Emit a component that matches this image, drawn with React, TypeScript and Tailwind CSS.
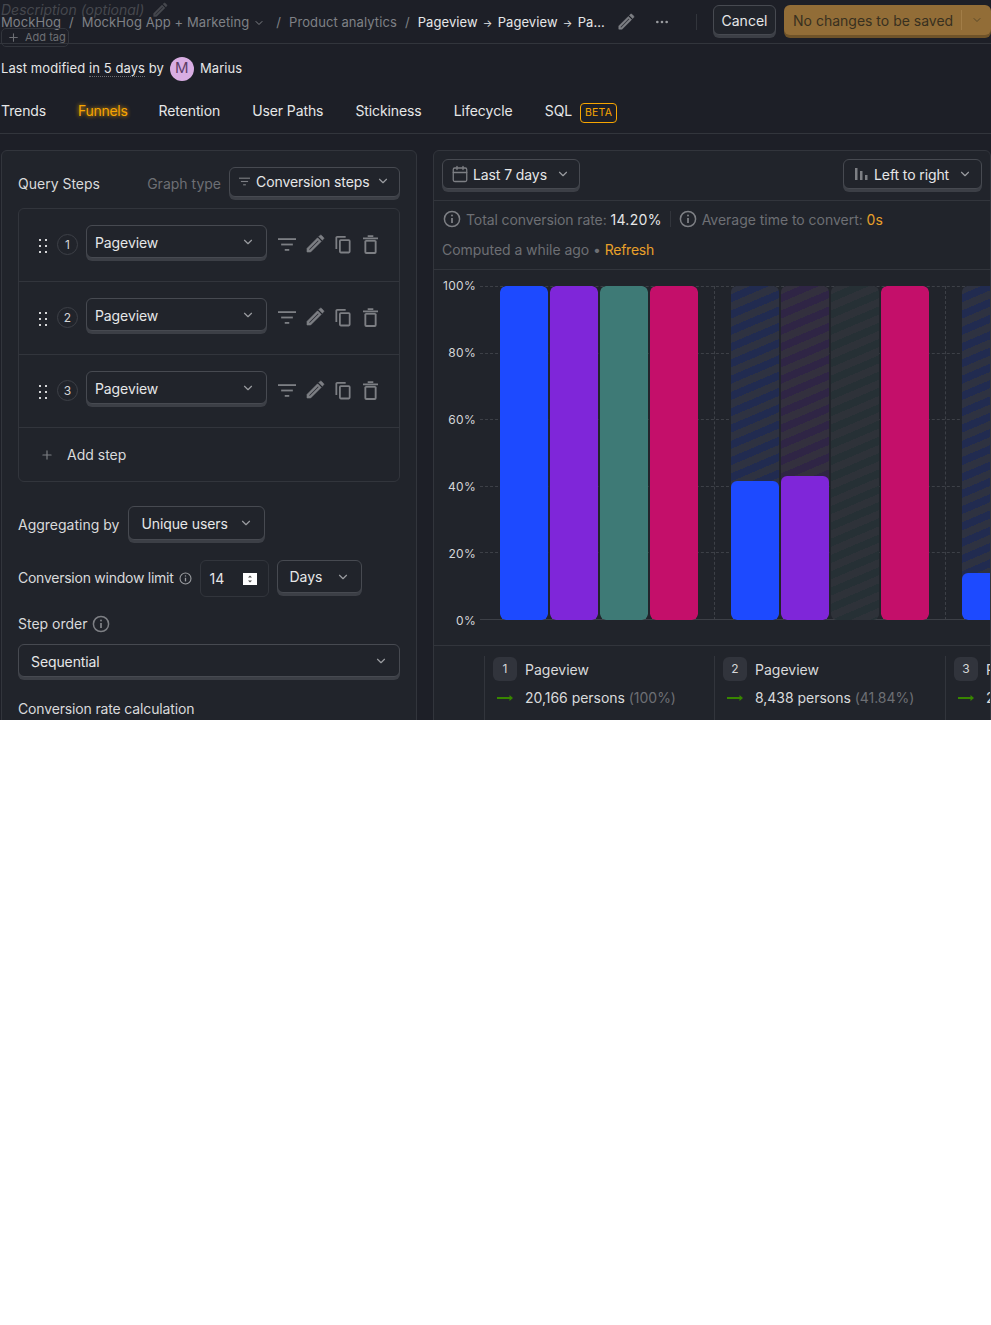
import React from 'react';
import { ChevronDown, Plus, MoreHorizontal, Calendar } from 'lucide-react';

const FONT = "font-['Inter','Liberation_Sans',sans-serif]";

const Pencil = ({ className }: { className?: string }) => (
    <svg viewBox="0 0 20 20" className={className} fill="currentColor" stroke="currentColor" strokeWidth="0.6">
        <path d="M2 18v-3.6L12.6 3.8l3.6 3.6L5.6 18H2zm2-2.8V16h.8l9-9-.8-.8-9 9zM13.8 2.6l1.1-1.1c.5-.5 1.2-.5 1.7 0l1.9 1.9c.5.5.5 1.2 0 1.7l-1.1 1.1-3.6-3.6z" />
    </svg>
);

const FilterLines = ({ className }: { className?: string }) => (
    <svg viewBox="0 0 20 14" className={className} fill="currentColor">
        <rect x="0" y="0" width="20" height="2" />
        <rect x="3.5" y="6" width="13" height="2" />
        <rect x="7.5" y="12" width="5" height="2" />
    </svg>
);

const CopyIcon = ({ className }: { className?: string }) => (
    <svg viewBox="0 0 18 20" className={className} fill="none" stroke="currentColor" strokeWidth="2">
        <path d="M1.5 15V2.5a1 1 0 0 1 1-1H12" />
        <rect x="5.5" y="5" width="11" height="14" rx="1" />
    </svg>
);

const TrashIcon = ({ className }: { className?: string }) => (
    <svg viewBox="0 0 16 20" className={className} fill="none" stroke="currentColor" strokeWidth="2">
        <path d="M0 3.5h16M5 1h6" />
        <path d="M2.5 6v12a1 1 0 0 0 1 1h9a1 1 0 0 0 1-1V6" />
        <path d="M2.5 6h11" />
    </svg>
);

const InfoIcon = ({ className }: { className?: string }) => (
    <svg viewBox="0 0 18 18" className={className} fill="none" stroke="currentColor" strokeWidth="1.5">
        <circle cx="9" cy="9" r="7.6" />
        <path d="M9 8v5" strokeWidth="1.8" />
        <circle cx="9" cy="5.4" r="1" fill="currentColor" stroke="none" />
    </svg>
);

const GreenArrow = () => (
    <svg viewBox="0 0 16 8" className="w-[16px] h-[8px] text-[#388600]" fill="currentColor">
        <rect x="0" y="3" width="14" height="2" />
        <path d="M12.5 1L16 4l-3.5 3z" />
    </svg>
);

const DragDots = () => (
    <svg viewBox="0 0 8 14" className="w-[8px] h-[14px] text-[#d5d6d8]" fill="currentColor">
        {[1, 7, 13].map(y => (
            <React.Fragment key={y}>
                <rect x="0" y={y - 1} width="2" height="2" />
                <rect x="6" y={y - 1} width="2" height="2" />
            </React.Fragment>
        ))}
    </svg>
);

const SelectButton: React.FC<{ label: string; className?: string; icon?: React.ReactNode }> = ({ label, className, icon }) => (
    <div className={`flex items-center justify-between rounded-[6px] border border-[#474a51] bg-[#21242b] shadow-[0_3px_0_0_#3c3f46] text-[14px] tracking-[-0.1px] text-[#e6e7e8] ${className ?? ''}`}>
        <span className="flex items-center gap-[6px] whitespace-nowrap">{icon}{label}</span>
        <ChevronDown className="w-[14px] h-[14px] text-[#9a9ca0]" />
    </div>
);

const QueryStep: React.FC<{ n: number }> = ({ n }) => (
    <div className="flex items-start h-[73px] border-b border-[#32353c] pt-[16px]">
        <div className="w-[19px] ml-[20px] mt-[14px]"><DragDots /></div>
        <div className="w-[21px] h-[21px] mt-[9px] ml-[-1px] rounded-full border border-[#3d4047] flex items-center justify-center text-[12px] text-[#d5d6d8]">{n}</div>
        <SelectButton label="Pageview" className="ml-[8px] w-[181px] h-[33px] pl-[8px] pr-[11px] pt-[1px]" />
        <div className="flex items-center text-[#7d7f84] mt-[9px]">
            <FilterLines className="w-[18px] h-[13px] ml-[11px]" />
            <Pencil className="w-[20px] h-[20px] ml-[9px]" />
            <CopyIcon className="w-[16px] h-[19px] ml-[10px]" />
            <TrashIcon className="w-[15px] h-[19px] ml-[12px]" />
        </div>
    </div>
);

const Bar: React.FC<{ color: string; ghost?: string; height?: string }> = ({ color, ghost, height }) => (
    <div className={`relative w-[48px] h-full rounded-[6px] overflow-hidden shrink-0 ${ghost ?? ''}`}>
        {height && <div className={`absolute bottom-0 left-0 right-0 rounded-[6px] ${color} ${height}`} />}
    </div>
);

const BLUE_GHOST = 'bg-[repeating-linear-gradient(157deg,#2e3241_0px,#2e3241_7.5px,#212b50_7.5px,#212b50_15px)]';
const PURPLE_GHOST = 'bg-[repeating-linear-gradient(157deg,#33303e_0px,#33303e_7.5px,#2f2545_7.5px,#2f2545_15px)]';
const TEAL_GHOST = 'bg-[repeating-linear-gradient(157deg,#2e3239_0px,#2e3239_7.5px,#263035_7.5px,#263035_15px)]';

const Arrow = () => <span className="inline-block w-[20px] text-center text-[10px]">→</span>;

const LegendColumn: React.FC<{ n: number; persons: string; pct: string; className: string }> = ({ n, persons, pct, className }) => (
    <div className={`shrink-0 border-l border-[#32353c] pl-[8px] pt-[1px] h-[80px] ${className}`}>
        <div className="flex items-center gap-[8px]">
            <div className="w-[24px] h-[24px] rounded-[6px] bg-[#31343c] flex items-center justify-center text-[12px] text-[#d5d6d8]">{n}</div>
            <span className="text-[14px] text-[#d9dadb] whitespace-nowrap">Pageview</span>
        </div>
        <div className="flex items-center gap-[8px] mt-[3px]">
            <div className="w-[24px] flex justify-center"><GreenArrow /></div>
            <span className="text-[14px] tracking-[-0.03px] text-[#d9dadb] whitespace-nowrap h-[28px] leading-[28px]">{persons} persons <span className="text-[#6d6f74]">({pct})</span></span>
        </div>
    </div>
);

export default function App() {
    return (
        <div className={`h-[720px] overflow-hidden bg-[#1d1f27] flex flex-col ${FONT}`}>
            {/* top bar */}
            <div className="relative h-[44px] shrink-0 border-b border-[#32353c] flex items-center justify-between pl-[1px]">
                <div className="flex items-center mt-[3px] text-[13px] tracking-[0.08px] text-[#7f8186] whitespace-nowrap">
                    <span>MockHog</span>
                    <span className="mx-[8px]">/</span>
                    <span>MockHog App + Marketing</span>
                    <ChevronDown className="w-[12px] h-[12px] ml-[4px]" />
                    <span className="ml-[11px] mr-[8px]">/</span>
                    <span>Product analytics</span>
                    <span className="mx-[8px]">/</span>
                    <span className="text-[#e6e7e8]">Pageview<Arrow />Pageview<Arrow />Pa...</span>
                    <Pencil className="w-[18px] h-[18px] ml-[12px] -mt-[3px] text-[#7d7f84]" />
                    <MoreHorizontal className="w-[16px] h-[16px] ml-[19px] -mt-[3px] text-[#9a9ca0]" />
                    <div className="w-px h-[16px] bg-[#32353c] ml-[26px] -mt-[3px]" />
                </div>
                <div className="flex items-center gap-[8px]">
                    <div className="h-[30px] w-[63px] mb-[3px] rounded-[6px] border border-[#474a51] bg-[#21242b] shadow-[0_3px_0_0_#3c3f46] flex items-center justify-center text-[14px] text-[#e6e7e8]">Cancel</div>
                    <div className="h-[30px] w-[207px] mb-[3px] rounded-[6px] bg-[#926d37] shadow-[0_3px_0_0_#6f5329] flex items-center pl-[9px] text-[14px] text-[#38301f]">
                        <span className="whitespace-nowrap">No changes to be saved</span>
                        <div className="w-px h-[20px] bg-[#a27d47] ml-[8px]" />
                        <ChevronDown className="w-[12px] h-[12px] ml-[9px] text-[#5b4a2a]" />
                    </div>
                </div>
                {/* these two overlap the breadcrumbs in the original */}
                <div className="absolute left-[1px] top-[0px] flex items-center gap-[8px] text-[14px] leading-[20px] italic text-[#46484e] whitespace-nowrap">
                    Description (optional)
                    <Pencil className="w-[16px] h-[16px]" />
                </div>
                <div className="absolute left-[1px] top-[28px] w-[68px] h-[19px] rounded-[5px] border border-[#32353c] flex items-start pl-[5px] gap-[5px] text-[11px] text-[#6d6f74]">
                    <Plus className="w-[13px] h-[13px] mt-[2px]" />
                    <span className="block h-[14px] leading-[17px] overflow-hidden">Add tag</span>
                </div>
            </div>

            {/* last modified */}
            <div className="h-[48px] shrink-0 flex items-center pl-[1px] pt-[1px] text-[13px] tracking-[0.08px] text-[#e6e7e8] whitespace-nowrap">
                <span>Last modified&nbsp;</span>
                <span className="border-b border-dotted border-[#6d6f74] leading-[16px]">in 5 days</span>
                <span>&nbsp;by</span>
                <div className="w-[24px] h-[24px] rounded-full bg-[#d9aee3] text-[#5d3d68] flex items-center justify-center text-[15px] ml-[6px] mr-[6px]">M</div>
                <span>Marius</span>
            </div>

            {/* tabs */}
            <div className="h-[42px] shrink-0 border-b border-[#32353c] flex items-center pl-[1px] pb-[4px] gap-[32px] text-[14px] tracking-[-0.1px] text-[#e6e7e8] whitespace-nowrap">
                <span>Trends</span>
                <span className="-mr-[1px] tracking-[-0.3px] text-[#f7a501] [text-shadow:0_0_4px_#f7a501]">Funnels</span>
                <span>Retention</span>
                <span>User Paths</span>
                <span>Stickiness</span>
                <span className="tracking-normal">Lifecycle</span>
                <span className="flex items-center gap-[8px]">
                    SQL
                    <span className="h-[20px] w-[37px] justify-center rounded-[4px] border border-[#f7a501] text-[#f7a501] text-[10.5px] tracking-[0.2px] flex items-center mt-[4px]">BETA</span>
                </span>
            </div>

            {/* main */}
            <div className="flex-1 min-h-0 flex gap-[16px] pl-[1px] pt-[16px]">
                {/* query panel */}
                <div className="w-[416px] shrink-0 h-[700px] rounded-[6px] border border-[#32353c] bg-[#21242b] px-[16px] pt-[16px] text-[14px] text-[#d9dadb]">
                    <div className="flex items-center h-[30px]">
                        <span className="mt-[2px]">Query Steps</span>
                        <span className="ml-auto mt-[2px] text-[#6d6f74]">Graph type</span>
                        <SelectButton
                            label="Conversion steps"
                            className="ml-[8px] w-[171px] h-[30px] pl-[9px] pr-[9px] pb-[2px]"
                            icon={<FilterLines className="w-[11px] h-[9px] text-[#7d7f84]" />}
                        />
                    </div>
                    <div className="mt-[11px] rounded-[6px] border border-[#32353c]">
                        <QueryStep n={1} />
                        <QueryStep n={2} />
                        <QueryStep n={3} />
                        <div className="h-[53px] flex items-center pl-[21px] gap-[13px]">
                            <Plus className="w-[14px] h-[14px] text-[#7d7f84]" />
                            <span>Add step</span>
                        </div>
                    </div>
                    <div className="mt-[24px] flex items-center gap-[9px]">
                        <span className="mt-[2px]">Aggregating by</span>
                        <SelectButton label="Unique users" className="w-[137px] h-[34px] pl-[12px] pr-[11px]" />
                    </div>
                    <div className="mt-[20px] flex items-center">
                        <span className="tracking-[-0.25px] mb-[2px]">Conversion window limit</span>
                        <InfoIcon className="w-[13px] h-[13px] ml-[5px] text-[#9a9ca0]" />
                        <div className="ml-[8px] w-[69px] h-[37px] rounded-[6px] border border-[#32353c] flex items-center pl-[9px] text-[#e6e7e8]">
                            14
                            <svg viewBox="0 0 14 12" className="w-[14px] h-[12px] ml-[19px]">
                                <rect width="14" height="12" fill="#ffffff" />
                                <path d="M7 2.5l2 2H5zM7 9.5l2-2H5z" fill="#4a4a4a" />
                            </svg>
                        </div>
                        <SelectButton label="Days" className="ml-[8px] w-[85px] h-[33px] pl-[12px] pr-[11px] self-start" />
                    </div>
                    <div className="mt-[16px] flex items-center gap-[4px]">
                        <span>Step order</span>
                        <InfoIcon className="w-[18px] h-[18px] text-[#7d7f84]" />
                    </div>
                    <SelectButton label="Sequential" className="mt-[10px] w-full h-[33px] pl-[12px] pr-[11px] pt-[1px]" />
                    <div className="mt-[21px] tracking-[-0.15px]">Conversion rate calculation</div>
                </div>

                {/* results panel */}
                <div className="flex-1 min-w-0 h-[700px] rounded-[6px] border border-[#32353c] bg-[#21242b] overflow-hidden">
                    <div className="h-[50px] border-b border-[#32353c] flex items-start justify-between pt-[8px] pl-[8px] pr-[8px]">
                        <SelectButton
                            label="Last 7 days"
                            className="w-[138px] h-[30px] pl-[8px] pr-[9px]"
                            icon={<Calendar className="w-[18px] h-[18px] text-[#7d7f84] -mr-[2px]" strokeWidth={1.7} />}
                        />
                        <SelectButton
                            label="Left to right"
                            className="w-[139px] h-[30px] pl-[10px] pr-[9px]"
                            icon={
                                <svg viewBox="0 0 14 14" className="w-[14px] h-[14px] text-[#7d7f84]" fill="currentColor">
                                    <rect x="1" y="1" width="2.5" height="12" />
                                    <rect x="6" y="4" width="2.5" height="9" />
                                    <rect x="11" y="8" width="2.5" height="5" />
                                </svg>
                            }
                        />
                    </div>
                    <div className="h-[69px] border-b border-[#32353c] px-[8px] pt-[8px] text-[14px] text-[#6d6f74] whitespace-nowrap">
                        <div className="flex items-center h-[20px]">
                            <InfoIcon className="w-[18px] h-[18px] mr-[5px] ml-[1px] text-[#7d7f84]" />
                            <span className="tracking-[-0.1px]">Total conversion rate:&nbsp;</span>
                            <span className="tracking-[0.3px] text-[#e6e7e8]">14.20%</span>
                            <div className="w-px h-[16px] bg-[#32353c] mx-[8px]" />
                            <InfoIcon className="w-[18px] h-[18px] mr-[5px] text-[#7d7f84]" />
                            <span className="tracking-[-0.03px]">Average time to convert:&nbsp;</span>
                            <span className="text-[#e8a02a]">0s</span>
                        </div>
                        <div className="mt-[10px] tracking-[-0.05px]">
                            Computed a while ago • <span className="tracking-[-0.25px] text-[#e8a02a]">Refresh</span>
                        </div>
                    </div>

                    {/* chart */}
                    <div className="h-[376px] border-b border-[#32353c] pt-[16px] flex">
                        <div className="w-[42px] h-[349px] -mt-[7px] flex flex-col justify-between items-end text-[12px] leading-[14px] tracking-[0.3px] text-[#d5d6d8] shrink-0">
                            <span>100%</span>
                            <span>80%</span>
                            <span>60%</span>
                            <span>40%</span>
                            <span>20%</span>
                            <span>0%</span>
                        </div>
                        <div className="relative ml-[4px] flex-1 min-w-0 h-[334px] flex pl-[4px]">
                            <div className="absolute inset-0 flex flex-col justify-between">
                                <div className="border-t border-dashed border-[#3d4047]" />
                                <div className="border-t border-dashed border-[#3d4047]" />
                                <div className="border-t border-dashed border-[#3d4047]" />
                                <div className="border-t border-dashed border-[#3d4047]" />
                                <div className="border-t border-dashed border-[#3d4047]" />
                                <div className="border-t border-[#3d4047]" />
                            </div>
                            <div className="relative w-[230px] shrink-0 pl-[16px] flex gap-[2px]">
                                <Bar color="bg-[#1d4aff]" height="h-full" />
                                <Bar color="bg-[#7f26d9]" height="h-full" />
                                <Bar color="bg-[#3e7a76]" height="h-full" />
                                <Bar color="bg-[#c40f6a]" height="h-full" />
                            </div>
                            <div className="relative w-[231px] shrink-0 pl-[16px] flex gap-[2px] border-l border-dashed border-[#3d4047]">
                                <Bar color="bg-[#1d4aff]" ghost={BLUE_GHOST} height="h-[139px]" />
                                <Bar color="bg-[#7f26d9]" ghost={PURPLE_GHOST} height="h-[144px]" />
                                <Bar color="bg-[#3e7a76]" ghost={TEAL_GHOST} />
                                <Bar color="bg-[#c40f6a]" height="h-full" />
                            </div>
                            <div className="relative w-[231px] shrink-0 pl-[16px] flex gap-[2px] border-l border-dashed border-[#3d4047]">
                                <Bar color="bg-[#1d4aff]" ghost={BLUE_GHOST} height="h-[47px]" />
                            </div>
                        </div>
                    </div>

                    {/* legend */}
                    <div className="flex pl-[50px] pt-[10px]">
                        <LegendColumn n={1} persons="20,166" pct="100%" className="w-[230px]" />
                        <LegendColumn n={2} persons="8,438" pct="41.84%" className="w-[231px]" />
                        <LegendColumn n={3} persons="2,864" pct="14.20%" className="w-[231px]" />
                    </div>
                </div>
            </div>
        </div>
    );
}
